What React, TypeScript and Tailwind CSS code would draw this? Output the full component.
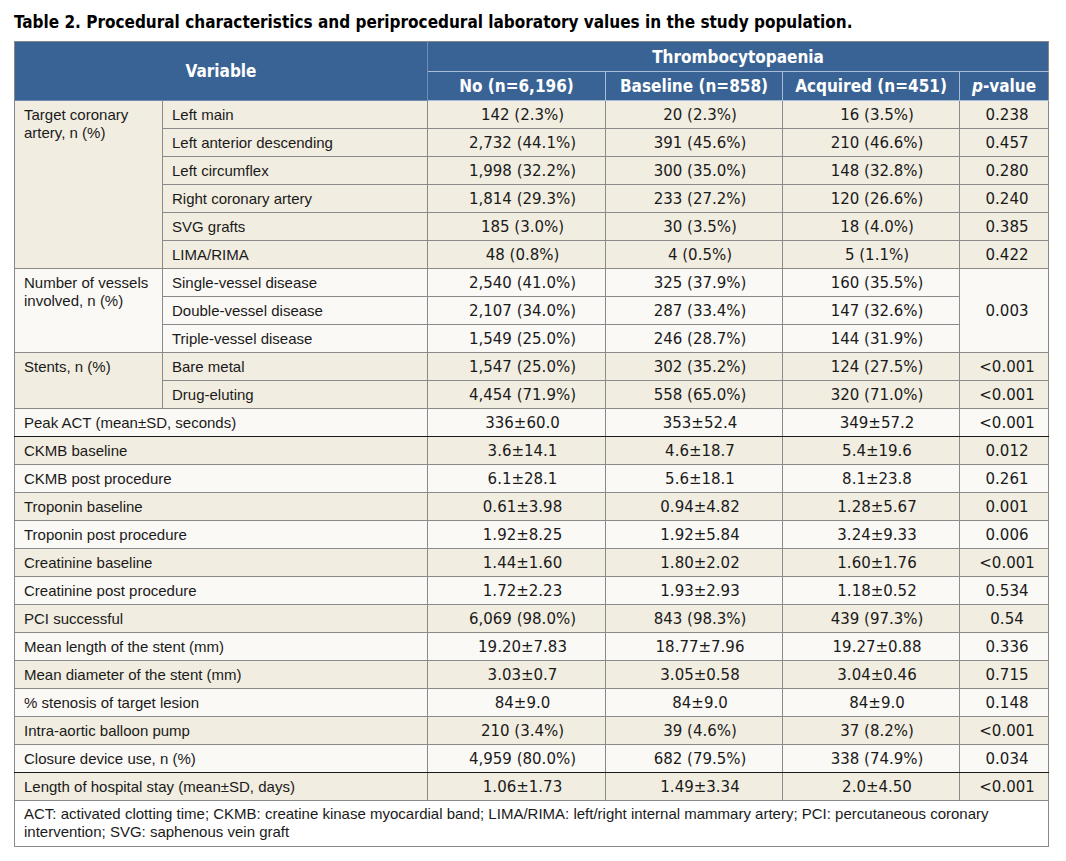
import React from 'react';

type Row = {
  group?: { label: string; span: number };
  label: string;
  full?: boolean;
  no: string;
  base: string;
  acq: string;
  p?: string;
  pSpan?: number;
  beige: boolean;
  thick?: boolean;
};

const rows: Row[] = [
  { group: { label: 'Target coronary artery, n (%)', span: 6 }, label: 'Left main', no: '142 (2.3%)', base: '20 (2.3%)', acq: '16 (3.5%)', p: '0.238', beige: true },
  { label: 'Left anterior descending', no: '2,732 (44.1%)', base: '391 (45.6%)', acq: '210 (46.6%)', p: '0.457', beige: true },
  { label: 'Left circumflex', no: '1,998 (32.2%)', base: '300 (35.0%)', acq: '148 (32.8%)', p: '0.280', beige: true },
  { label: 'Right coronary artery', no: '1,814 (29.3%)', base: '233 (27.2%)', acq: '120 (26.6%)', p: '0.240', beige: true },
  { label: 'SVG grafts', no: '185 (3.0%)', base: '30 (3.5%)', acq: '18 (4.0%)', p: '0.385', beige: true },
  { label: 'LIMA/RIMA', no: '48 (0.8%)', base: '4 (0.5%)', acq: '5 (1.1%)', p: '0.422', beige: true },
  { group: { label: 'Number of vessels involved, n (%)', span: 3 }, label: 'Single-vessel disease', no: '2,540 (41.0%)', base: '325 (37.9%)', acq: '160 (35.5%)', p: '0.003', pSpan: 3, beige: false },
  { label: 'Double-vessel disease', no: '2,107 (34.0%)', base: '287 (33.4%)', acq: '147 (32.6%)', beige: false },
  { label: 'Triple-vessel disease', no: '1,549 (25.0%)', base: '246 (28.7%)', acq: '144 (31.9%)', beige: false },
  { group: { label: 'Stents, n (%)', span: 2 }, label: 'Bare metal', no: '1,547 (25.0%)', base: '302 (35.2%)', acq: '124 (27.5%)', p: '<0.001', beige: true },
  { label: 'Drug-eluting', no: '4,454 (71.9%)', base: '558 (65.0%)', acq: '320 (71.0%)', p: '<0.001', beige: true },
  { label: 'Peak ACT (mean±SD, seconds)', full: true, no: '336±60.0', base: '353±52.4', acq: '349±57.2', p: '<0.001', beige: false, thick: true },
  { label: 'CKMB baseline', full: true, no: '3.6±14.1', base: '4.6±18.7', acq: '5.4±19.6', p: '0.012', beige: true },
  { label: 'CKMB post procedure', full: true, no: '6.1±28.1', base: '5.6±18.1', acq: '8.1±23.8', p: '0.261', beige: false },
  { label: 'Troponin baseline', full: true, no: '0.61±3.98', base: '0.94±4.82', acq: '1.28±5.67', p: '0.001', beige: true },
  { label: 'Troponin post procedure', full: true, no: '1.92±8.25', base: '1.92±5.84', acq: '3.24±9.33', p: '0.006', beige: false },
  { label: 'Creatinine baseline', full: true, no: '1.44±1.60', base: '1.80±2.02', acq: '1.60±1.76', p: '<0.001', beige: true },
  { label: 'Creatinine post procedure', full: true, no: '1.72±2.23', base: '1.93±2.93', acq: '1.18±0.52', p: '0.534', beige: false },
  { label: 'PCI successful', full: true, no: '6,069 (98.0%)', base: '843 (98.3%)', acq: '439 (97.3%)', p: '0.54', beige: true },
  { label: 'Mean length of the stent (mm)', full: true, no: '19.20±7.83', base: '18.77±7.96', acq: '19.27±0.88', p: '0.336', beige: false },
  { label: 'Mean diameter of the stent (mm)', full: true, no: '3.03±0.7', base: '3.05±0.58', acq: '3.04±0.46', p: '0.715', beige: true },
  { label: '% stenosis of target lesion', full: true, no: '84±9.0', base: '84±9.0', acq: '84±9.0', p: '0.148', beige: false },
  { label: 'Intra-aortic balloon pump', full: true, no: '210 (3.4%)', base: '39 (4.6%)', acq: '37 (8.2%)', p: '<0.001', beige: true },
  { label: 'Closure device use, n (%)', full: true, no: '4,959 (80.0%)', base: '682 (79.5%)', acq: '338 (74.9%)', p: '0.034', beige: false, thick: true },
  { label: 'Length of hospital stay (mean±SD, days)', full: true, no: '1.06±1.73', base: '1.49±3.34', acq: '2.0±4.50', p: '<0.001', beige: true },
];

const cond = { fontFamily: '"Liberation Sans Narrow", "DejaVu Sans Condensed", "Roboto Condensed", "Arial Narrow", sans-serif', fontStretch: 'condensed' as const };
const num = { fontFamily: '"DejaVu Sans", Verdana, sans-serif' };

export default function App() {
  return (
    <div className="w-[1066px] h-[861px] bg-white text-[#1a1a1a]" style={{ fontFamily: '"Liberation Sans", Arial, sans-serif' }}>
      <div className="pt-[12px] pl-[14px] h-[41px] text-[17px] font-bold leading-[20px] text-black" style={cond}>
        Table 2. Procedural characteristics and periprocedural laboratory values in the study population.
      </div>
      <table className="ml-[14px] w-[1034px] table-fixed border-collapse text-[15px] leading-[18px]">
        <colgroup>
          <col className="w-[148px]" />
          <col className="w-[265px]" />
          <col className="w-[178px]" />
          <col className="w-[177px]" />
          <col className="w-[177px]" />
          <col className="w-[89px]" />
        </colgroup>
        <thead className="bg-[#3a6395] text-white text-[17px] font-bold" style={cond}>
          <tr className="h-[30px]">
            <th colSpan={2} rowSpan={2} className="border border-[#6f8db3] border-t-[#888] border-l-[#888] font-bold">Variable</th>
            <th colSpan={4} className="border border-[#a8bcd6] border-t-[#888] border-r-[#888] font-bold">Thrombocytopaenia</th>
          </tr>
          <tr className="h-[29px]">
            <th className="border border-[#a8bcd6] font-bold">No (n=6,196)</th>
            <th className="border border-[#a8bcd6] font-bold">Baseline (n=858)</th>
            <th className="border border-[#a8bcd6] font-bold">Acquired (n=451)</th>
            <th className="border border-[#a8bcd6] border-r-[#888] font-bold"><i>p</i>-value</th>
          </tr>
        </thead>
        <tbody>
          {rows.map((r, i) => {
            const bg = r.beige ? 'bg-[#f1ede0]' : 'bg-[#faf9f5]';
            const bb = r.thick ? 'border-b-[#1a1a1a]' : '';
            return (
              <tr key={i} className={`h-[28px] ${bg}`}>
                {r.group && (
                  <td rowSpan={r.group.span} className="border border-[#8a8a8a] border-l-[#888] align-top pl-[9px] pr-[4px] pt-[5px]">
                    {r.group.label}
                  </td>
                )}
                <td colSpan={r.full ? 2 : 1} className={`border border-[#8a8a8a] pl-[9px] ${bb}`}>{r.label}</td>
                <td className={`border border-[#8a8a8a] text-center pl-[12px] text-[15px] ${bb}`} style={num}>{r.no}</td>
                <td className={`border border-[#8a8a8a] text-center pl-[12px] text-[15px] ${bb}`} style={num}>{r.base}</td>
                <td className={`border border-[#8a8a8a] text-center pl-[12px] text-[15px] ${bb}`} style={num}>{r.acq}</td>
                {r.p !== undefined && (
                  <td rowSpan={r.pSpan ?? 1} className={`border border-[#8a8a8a] border-r-[#888] text-center pl-[6px] text-[15px] ${bb}`} style={num}>{r.p}</td>
                )}
              </tr>
            );
          })}
          <tr>
            <td colSpan={6} className="border border-[#8a8a8a] border-t-[#1a1a1a] bg-white text-[15px] leading-[18px] pl-[9px] pr-[20px] pt-[4px] pb-[5px]">
              ACT: activated clotting time; CKMB: creatine kinase myocardial band; LIMA/RIMA: left/right internal mammary artery; PCI: percutaneous coronary intervention; SVG: saphenous vein graft
            </td>
          </tr>
        </tbody>
      </table>
    </div>
  );
}
